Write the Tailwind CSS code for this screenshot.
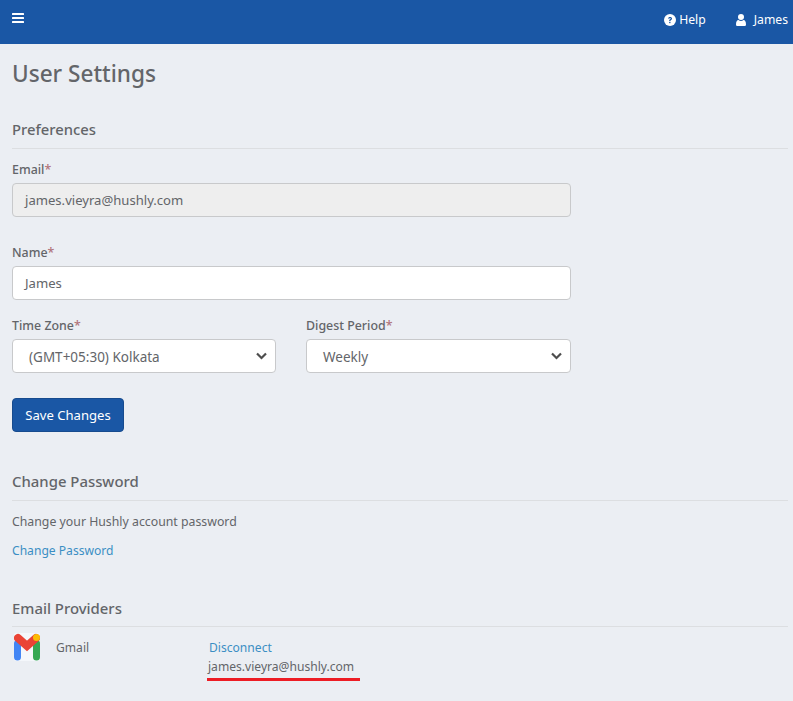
<!DOCTYPE html>
<html lang="en">
  <head>
    <meta charset="UTF-8" />
    <meta name="viewport" content="width=device-width, initial-scale=1.0" />
    <title>User Settings</title>
    <script src="https://cdn.jsdelivr.net/npm/@tailwindcss/browser@4"></script>
  </head>
  <body class="bg-[#ebeef3] h-[701px] overflow-hidden font-['Noto_Sans',sans-serif] text-[13.1px] text-[#636569]">
    <!-- top bar -->
    <header class="h-[44px] bg-[#1a57a5] text-white flex items-start justify-between pl-3 pr-[5px] pt-[10px]">
      <svg class="w-3 h-[10px] mt-[3px]" viewBox="0 0 12 10" fill="#fff">
        <rect y="0" width="12" height="2" rx="0.5" />
        <rect y="4" width="12" height="2" rx="0.5" />
        <rect y="8" width="12" height="2" rx="0.5" />
      </svg>
      <div class="flex items-center gap-[30px] leading-[20px] text-[12.2px]">
        <div class="flex items-center gap-[3px]">
          <svg class="w-3 h-3" viewBox="0 0 24 24">
            <circle cx="12" cy="12" r="12" fill="#fff" />
            <path d="M8 9.2c.2-2.2 1.9-3.4 4.1-3.4 2.3 0 4 1.3 4 3.3 0 1.5-.9 2.3-2 3-.9.6-1.2 1-1.2 1.9h-2.6c0-1.7.5-2.5 1.700-3.300.8-.5 1.400-.9 1.400-1.500s-.6-1.100-1.300-1.100c-.8 0-1.300.5-1.400 1.300z" fill="#1a57a5" />
            <rect x="10.3" y="15.6" width="2.7" height="2.7" fill="#1a57a5" />
          </svg>
          <span>Help</span>
        </div>
        <div class="flex items-center gap-[8px]">
          <svg class="w-[10px] h-3" viewBox="0 0 20 24" fill="#fff">
            <circle cx="10" cy="6" r="6" />
            <path d="M0 21c0-6 2-9 5-9 1.5 1.2 3.200 1.800 5 1.800s3.500-.6 5-1.800c3 0 5 3 5 9 0 2-1.500 3-3 3H3c-1.500 0-3-1-3-3z" />
          </svg>
          <span>James</span>
        </div>
      </div>
    </header>

    <main class="pl-3 w-[793px]">
      <h1 class="text-[22.6px] font-medium leading-[30px] mt-[15px]">User Settings</h1>

      <section class="mt-[30px]">
        <h2 class="w-[776px] text-[14.8px] font-medium leading-[20px] pb-[9px] border-b border-[#dcdee1]">Preferences</h2>

        <div class="w-[559px]">
          <label class="block text-[12.4px] font-medium leading-[18px] mt-[12px] mb-[4px]">Email<span class="text-[#b0737a]">*</span></label>
          <div class="h-[34px] bg-[#eeeeee] border border-[#c8c9cb] rounded-[4px] px-3 leading-[32px]">james.vieyra@hushly.com</div>

          <label class="block text-[12.4px] font-medium leading-[18px] mt-[27px] mb-[4px]">Name<span class="text-[#b0737a]">*</span></label>
          <div class="h-[34px] bg-white border border-[#c8c9cb] rounded-[4px] px-3 leading-[32px]">James</div>

          <div class="flex gap-[30px] mt-[17px]">
            <div class="w-[264px]">
              <label class="block text-[12.4px] font-medium leading-[18px] mb-[4px]">Time Zone<span class="text-[#b0737a]">*</span></label>
              <div class="h-[34px] bg-white border border-[#c8c9cb] rounded-[4px] pl-[16px] pr-2 text-[13.5px] flex justify-between items-center">
                <span class="mt-[2px]">(GMT+05:30) Kolkata</span>
                <svg class="w-[11px] h-[8px]" viewBox="0 0 11 8" fill="none" stroke="#4d4d4d" stroke-width="2.200"><path d="M1 1.500l4.500 4.500 4.500-4.500" /></svg>
              </div>
            </div>
            <div class="flex-1">
              <label class="block text-[12.4px] font-medium leading-[18px] mb-[4px]">Digest Period<span class="text-[#b0737a]">*</span></label>
              <div class="h-[34px] bg-white border border-[#c8c9cb] rounded-[4px] pl-[16px] pr-2 text-[13.5px] flex justify-between items-center">
                <span class="mt-[2px]">Weekly</span>
                <svg class="w-[11px] h-[8px]" viewBox="0 0 11 8" fill="none" stroke="#4d4d4d" stroke-width="2.200"><path d="M1 1.500l4.500 4.500 4.500-4.500" /></svg>
              </div>
            </div>
          </div>

          <button class="block mt-[25px] w-[112px] h-[34px] bg-[#1a57a5] border border-[#174b8e] rounded-[4px] text-white leading-[32px]">Save Changes</button>
        </div>
      </section>

      <section class="mt-[39px]">
        <h2 class="w-[776px] text-[14.9px] font-medium leading-[20px] pb-[9px] border-b border-[#dcdee1]">Change Password</h2>
        <p class="text-[12.3px] leading-[18px] mt-[12px]">Change your Hushly account password</p>
        <a class="block text-[12.1px] text-[#3b8ec4] leading-[18px] mt-[11px]">Change Password</a>
      </section>

      <section class="mt-[38px]">
        <h2 class="w-[776px] text-[14.9px] font-medium leading-[20px] pb-[8px] border-b border-[#dcdee1]">Email Providers</h2>
        <div class="flex mt-[6px]">
          <div class="w-[44px] h-[28px] pl-[2px]">
            <svg class="w-[26px] h-[28px] blur-[0.4px]" viewBox="0 0 26 28">
              <rect width="26" height="28" rx="2" fill="#f4f7fb" />
              <path d="M3.500 10.500v13.500" stroke="#4285f4" stroke-width="7" stroke-linecap="round" />
              <path d="M22.500 10.500v13.500" stroke="#34a853" stroke-width="7" stroke-linecap="round" />
              <path d="M4 5l9 8 9-8" fill="none" stroke="#ea4335" stroke-width="8" stroke-linecap="round" />
              <circle cx="22.500" cy="4.500" r="3.500" fill="#fbbc04" />
            </svg>
          </div>
          <span class="block w-[151px] text-[12.1px] leading-[18px] pt-[6px]">Gmail</span>
          <div class="pt-[6px] text-[12.1px]">
            <a class="block text-[#3b8ec4] leading-[18px] pl-[2px]">Disconnect</a>
            <span class="block leading-[18px] mt-[1px] pl-[1px] pb-[2px] border-b-[3px] border-[#ed1c24] w-[153px] whitespace-nowrap">james.vieyra@hushly.com</span>
          </div>
        </div>
      </section>
    </main>
  </body>
</html>
